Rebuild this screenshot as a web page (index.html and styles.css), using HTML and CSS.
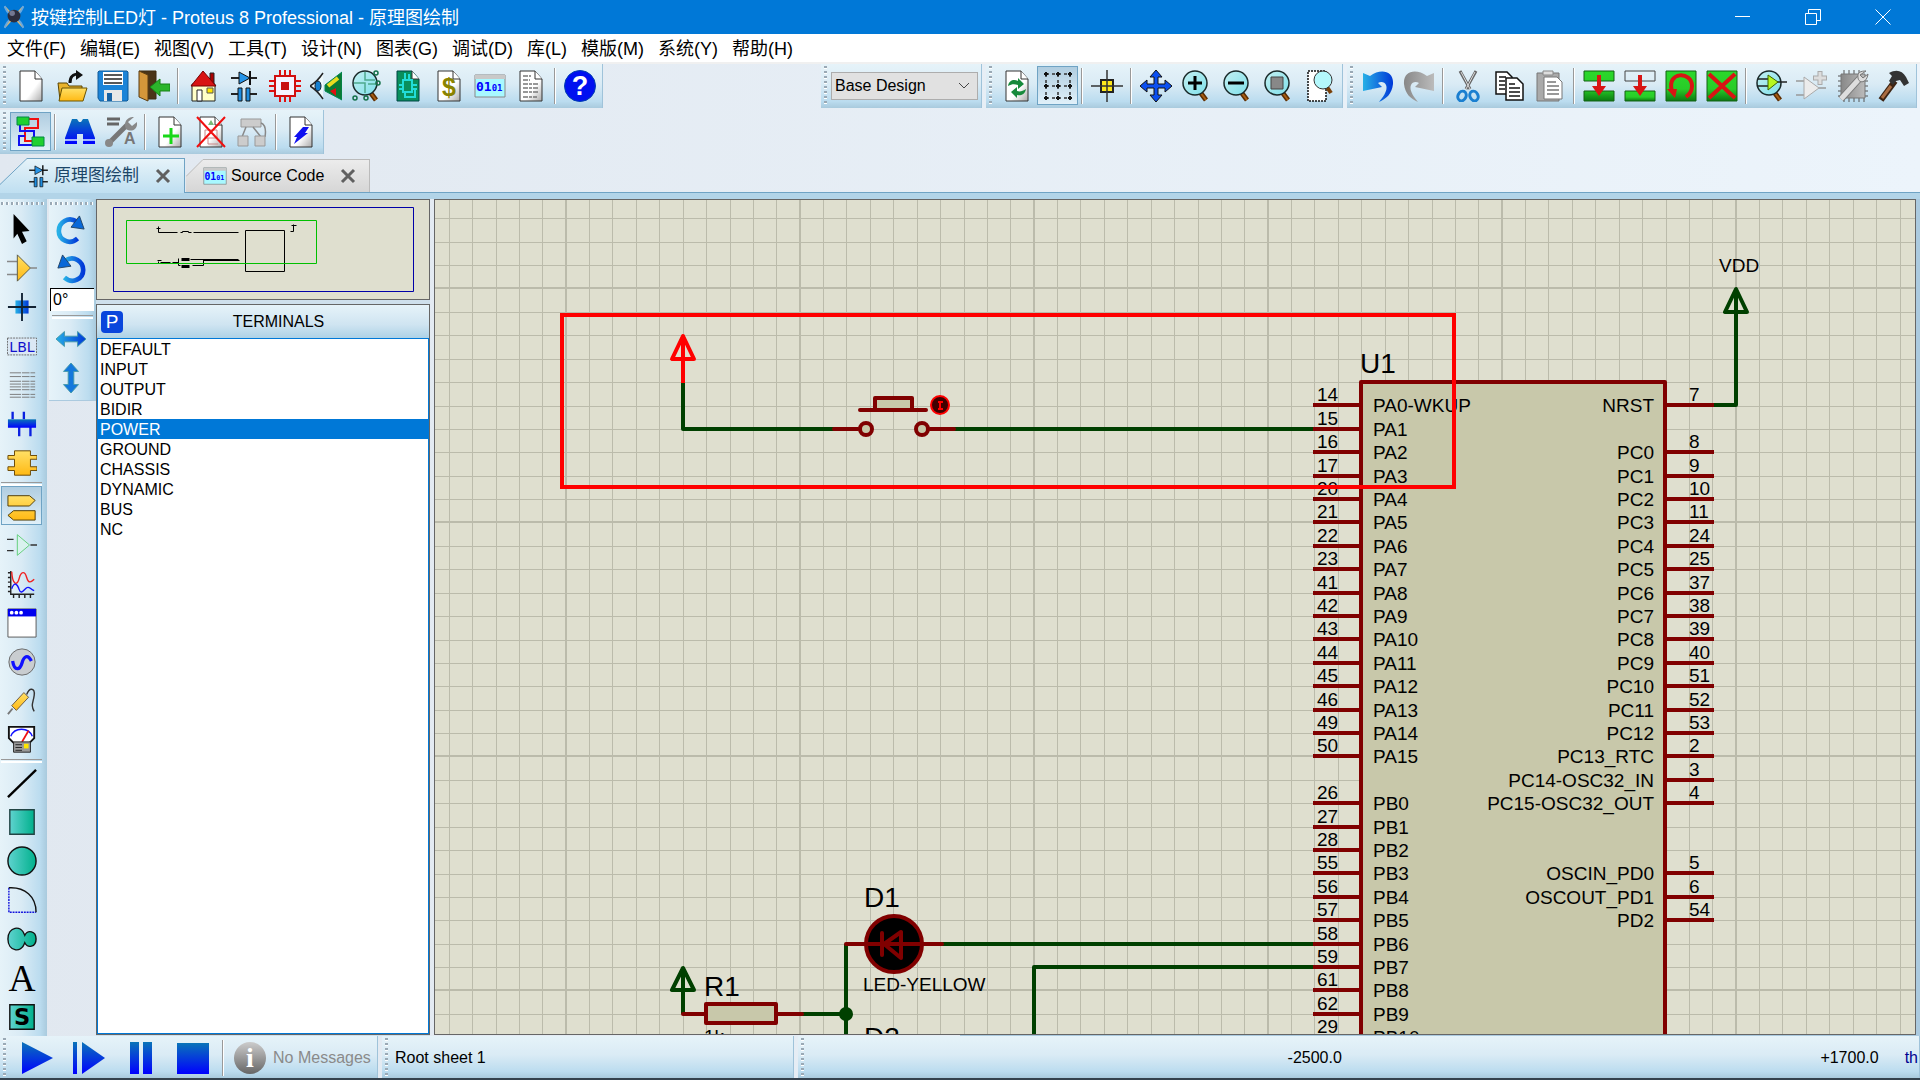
FILE: index.html
```html
<!DOCTYPE html>
<html lang="zh-CN">
<head>
<meta charset="utf-8">
<title>按键控制LED灯 - Proteus 8 Professional - 原理图绘制</title>
<link rel="stylesheet" href="styles.css">
</head>
<body>
<svg class="defs" width="0" height="0" aria-hidden="true">
  <defs>
    <linearGradient id="paper" x1="0" y1="0" x2="1" y2="1"><stop offset=".6" stop-color="#fff"/><stop offset="1" stop-color="#aaa"/></linearGradient>
    <linearGradient id="blueV" x1="0" y1="0" x2="0" y2="1"><stop offset="0" stop-color="#0a74b8"/><stop offset="1" stop-color="#00f"/></linearGradient>
    <linearGradient id="blueH" x1="0" y1="0" x2="1" y2="0"><stop offset="0" stop-color="#27b0e6"/><stop offset="1" stop-color="#0038d8"/></linearGradient>
    <linearGradient id="grayH" x1="0" y1="0" x2="1" y2="0"><stop offset="0" stop-color="#888"/><stop offset="1" stop-color="#bbb"/></linearGradient>
    <linearGradient id="gold" x1="0" y1="0" x2="0" y2="1"><stop offset="0" stop-color="#ffe066"/><stop offset="1" stop-color="#ffb914"/></linearGradient>
    <linearGradient id="teal" x1="0" y1="0" x2="1" y2="0"><stop offset="0" stop-color="#5fd3cf"/><stop offset="1" stop-color="#00b08c"/></linearGradient>
    <linearGradient id="green" x1="0" y1="0" x2="0" y2="1"><stop offset="0" stop-color="#2bd82b"/><stop offset=".6" stop-color="#28cc28"/><stop offset="1" stop-color="#0a7a12"/></linearGradient>
    <linearGradient id="lens" x1="0" y1="0" x2="1" y2="1"><stop offset="0" stop-color="#c4f0f2"/><stop offset="1" stop-color="#7fe0ea"/></linearGradient>
    <linearGradient id="steel" x1="0" y1="0" x2="0" y2="1"><stop offset="0" stop-color="#ccc"/><stop offset="1" stop-color="#666"/></linearGradient>
    <linearGradient id="tabOn" x1="0" y1="0" x2="0" y2="1"><stop offset="0" stop-color="#e6f3f9"/><stop offset="1" stop-color="#bfdff1"/></linearGradient>
    <linearGradient id="tabOff" x1="0" y1="0" x2="0" y2="1"><stop offset="0" stop-color="#ececec"/><stop offset="1" stop-color="#d6d6d6"/></linearGradient>
    <symbol id="page" viewBox="0 0 32 32"><path d="M5 1h15l7 8v22H5z" fill="url(#paper)" stroke="#333"/><path d="M20 1v8h7" fill="#fff" stroke="#333"/></symbol>
    <symbol id="schematic" viewBox="0 0 32 32"><path d="M3 8h26M3 24h9M20 24h9" stroke="#222" stroke-width="2"/><path d="M11 2v12l11-6z" fill="#2694e8" stroke="#111"/><path d="M22 1v14" stroke="#111" stroke-width="2"/><path d="M10 18h4v13h-4zM18 18h4v13h-4z" fill="#1d8ce0" stroke="#111"/></symbol>
    <symbol id="code" viewBox="0 0 32 24"><path d="M1 1h30v22H1z" fill="#a8f8ff" stroke="#888"/><path d="M1 1h30v4H1z" fill="#c9c9c9"/><text x="2" y="17" class="g-code" fill="#00f">01<tspan class="g-code-s">01</tspan></text></symbol>
    <symbol id="lensbox" viewBox="0 0 32 32"><path d="M19 22l6 8" stroke="#5c2c00" stroke-width="5"/><path d="M19 22l6 8" stroke="#a85f14" stroke-width="2"/><circle cx="14" cy="13" r="12" fill="url(#lens)" stroke="#1a2a2a" stroke-width="1.5"/></symbol>
  </defs>
</svg>

<header class="titlebar">
  <svg class="logo" viewBox="0 0 24 26"><path d="M2 2l20 22M22 2L2 24" stroke="#d8b878" stroke-width="2"/><path d="M2 1c1 5 4 8 7 10M22 1c-1 5-4 8-7 10M2 25c1-5 4-8 7-10M22 25c-1-5-4-8-7-10" fill="none" stroke="#69a7de" stroke-width="2"/><circle cx="12" cy="12" r="7" fill="#2c2d3c"/><circle cx="10" cy="9" r="3" fill="#737891"/></svg>
  <h1>按键控制LED灯 - Proteus 8 Professional - 原理图绘制</h1>
  <div class="window-buttons">
    <button aria-label="最小化"><svg viewBox="0 0 16 16"><path d="M0 7.500h15"/></svg></button>
    <button aria-label="还原"><svg viewBox="0 0 16 16"><path d="M.5 4.500h11v11H.5zM3.500 4V.5h12v11H12"/></svg></button>
    <button aria-label="关闭"><svg viewBox="0 0 16 16"><path d="M.5.5l15 15M15.500.5l-15 15"/></svg></button>
  </div>
</header>

<nav class="menubar">
  <button>文件(F)</button><button>编辑(E)</button><button>视图(V)</button><button>工具(T)</button><button>设计(N)</button><button>图表(G)</button><button>调试(D)</button><button>库(L)</button><button>模版(M)</button><button>系统(Y)</button><button>帮助(H)</button>
</nav>

<div class="toolrow">
  <div class="toolbar">
    <button class="tool" aria-label="新建"><svg><use href="#page"/></svg></button>
    <button class="tool" aria-label="打开"><svg viewBox="0 0 32 32"><path d="M2 13h9l2 3h13v14H4z" fill="#e9b32c" stroke="#5a4400"/><path d="M6 18h25l-4 13H3z" fill="url(#gold)" stroke="#6b5200"/><path d="M14 13c0-7 3-9 9-9" fill="none" stroke="#111" stroke-width="3"/><path d="M20 0l7 5-7 5z" fill="#111"/></svg></button>
    <button class="tool" aria-label="保存"><svg viewBox="0 0 32 32"><path d="M2 1h28l1 1v28l-1 1H3l-2-3V2z" fill="#1c84d8" stroke="#115a98"/><path d="M6 2h20v13H6z" fill="#fff"/><path d="M7 5h18M7 9h18M7 13h18" stroke="#222" stroke-width="1.500"/><path d="M7 20h18v11H7z" fill="#e8e8e8"/><path d="M10 23h5v8h-5z" fill="#1762a4"/></svg></button>
    <button class="tool" aria-label="关闭工程"><svg viewBox="0 0 32 32"><path d="M1 1h17v28H8" fill="#4a3418" stroke="#3d2a10"/><path d="M1 1l9 4v26l-9-4z" fill="#d4963a" stroke="#5b3d12"/><path d="M12 17l10-8v5h10v7H22v5z" fill="#2bb52b" stroke="#168016"/></svg></button>
    <span class="sep"></span>
    <button class="tool" aria-label="主页"><svg viewBox="0 0 32 32"><path d="M23 3h4v12h-4z" fill="#a00" stroke="#222"/><path d="M5 14h23v17H5z" fill="#ffffc8" stroke="#222"/><path d="M16 1l13 15H4z" fill="#d81414" stroke="#700"/><path d="M10 20h5v11h-5z" fill="#fff" stroke="#222"/><path d="M20 18h6v5h-6z" fill="#ffe600" stroke="#555"/></svg></button>
    <button class="tool" aria-label="原理图绘制"><svg><use href="#schematic"/></svg></button>
    <button class="tool" aria-label="PCB 布局"><svg viewBox="0 0 32 32"><path d="M11 0v6M16 0v6M21 0v6M11 26v6M16 26v6M21 26v6M0 11h6M0 16h6M0 21h6M26 11h6M26 16h6M26 21h6" stroke="#e01010" stroke-width="2"/><path d="M6 6h20v20H6z" fill="#f4f4ff" stroke="#d01010" stroke-width="2"/><path d="M12 12h8v8h-8z" fill="#c81010"/></svg></button>
    <button class="tool" aria-label="3D 查看器"><svg viewBox="0 0 32 32"><path d="M13 3C9 9 5 13 0 16c5 3 9 7 13 13" fill="#eef8fa" stroke="#222" stroke-width="1.500"/><ellipse cx="8" cy="16" rx="3" ry="5" fill="#147fd0" stroke="#123"/><path d="M32 2v28l-17-9v-6z" fill="#0b7a34" stroke="#085"/><path d="M18 16l10-8" stroke="#e8dc20" stroke-width="4"/><path d="M20 21l6-3v8z" fill="#e01010"/></svg></button>
    <button class="tool" aria-label="Gerber 查看器"><svg viewBox="0 0 32 32"><use href="#lensbox"/><path d="M3 13h11v10M14 2v8h10M17 14h8" fill="none" stroke="#4ea98d" stroke-width="1.500"/><g fill="none" stroke="#14714a" stroke-width="1.500"><circle cx="25" cy="3" r="2"/><circle cx="27" cy="13" r="2"/><circle cx="4" cy="28" r="2"/><circle cx="15" cy="28" r="2"/></g></svg></button>
    <button class="tool" aria-label="设计浏览器"><svg viewBox="0 0 32 32"><path d="M5 1h15l7 8v22H5z" fill="#098f5c" stroke="#044"/><path d="M20 1v8h7" fill="#fff" stroke="#333"/><path d="M11 10h9v12h-9zM7 15h4M20 15h5M7 19h4M20 19h5M13 3v7M17 4v6M13 22v5h10v-7" fill="none" stroke="#22ddd8" stroke-width="2"/></svg></button>
    <button class="tool" aria-label="物料清单"><svg viewBox="0 0 32 32"><use href="#page"/><text x="9" y="26" class="g-dollar" fill="#8a8300">$</text></svg></button>
    <button class="tool" aria-label="源代码"><svg><use href="#code"/></svg></button>
    <button class="tool" aria-label="工程备注"><svg viewBox="0 0 32 32"><use href="#page"/><path d="M8 6h8M8 10h7M8 14h15M8 18h15M8 22h15M8 27h14" stroke="#777" stroke-width="1.500" stroke-dasharray="5 1 3 1"/></svg></button>
    <span class="sep"></span>
    <button class="tool" aria-label="帮助"><svg viewBox="0 0 32 32"><circle cx="16" cy="16" r="15.500" fill="#0010f0" stroke="#0040b0"/><text x="16" y="25" text-anchor="middle" class="g-help" fill="#fff">?</text></svg></button>
  </div>
  <div class="toolbar push design">
    <label class="combo"><select aria-label="设计变体"><option>Base Design</option></select><svg viewBox="0 0 12 8"><path d="M1 1l5 5 5-5" fill="none" stroke="#444"/></svg></label>
  </div>
  <div class="toolbar">
    <button class="tool" aria-label="刷新"><svg viewBox="0 0 32 32"><use href="#page"/><path d="M7 16c1-6 6-7 10-5V8l6 6-6 5v-4c-4-1-6-1-10 1zM25 19c-1 6-6 7-9 6v3l-6-6 6-5v4c3 1 6 0 9-2z" fill="#178a3c"/></svg></button>
    <button class="tool on" aria-label="网格"><svg viewBox="0 0 32 32"><path d="M4 4h25M4 16h25M4 28h25M4 4v25M16 4v25M28 4v25" stroke="#333" stroke-width="1.500" stroke-dasharray="3 3"/><path d="M2 4h4M14 4h4M26 4h4M2 16h4M14 16h4M26 16h4M2 28h4M14 28h4M26 28h4M4 2v4M4 14v4M4 26v4M16 2v4M16 14v4M16 26v4M28 2v4M28 14v4M28 26v4" stroke="#111" stroke-width="2"/></svg></button>
    <span class="sep"></span>
    <button class="tool" aria-label="原点"><svg viewBox="0 0 32 32"><path d="M10 10h12v12H10z" fill="#ffe81c" stroke="#222" stroke-width="2"/><path d="M16 0v32M0 16h32" stroke="#333" stroke-width="1.500"/></svg></button>
    <span class="sep"></span>
    <button class="tool" aria-label="平移"><svg viewBox="0 0 32 32"><path d="M16 0l6 7h-4v7h7v-4l7 6-7 6v-4h-7v7h4l-6 7-6-7h4v-7H7v4l-7-6 7-6v4h7V7h-4z" fill="#0b4ff0" stroke="#111"/></svg></button>
    <button class="tool" aria-label="放大"><svg viewBox="0 0 32 32"><use href="#lensbox"/><path d="M14 6v14M7 13h14" stroke="#000" stroke-width="3"/></svg></button>
    <button class="tool" aria-label="缩小"><svg viewBox="0 0 32 32"><use href="#lensbox"/><path d="M6 13h16" stroke="#000" stroke-width="3"/></svg></button>
    <button class="tool" aria-label="查看全部"><svg viewBox="0 0 32 32"><use href="#lensbox"/><path d="M8 7h12v12H8z" fill="#888" stroke="#444"/></svg></button>
    <button class="tool" aria-label="查看区域"><svg viewBox="0 0 32 32"><path d="M4 1h18v30H4z" fill="#fff" stroke="#111" stroke-width="1.500" stroke-dasharray="2 1"/><path d="M23 17l4 6" stroke="#7a4008" stroke-width="4"/><circle cx="19" cy="10" r="9" fill="#b4f8fc" stroke="#333"/></svg></button>
  </div>
  <div class="toolbar">
    <button class="tool" aria-label="撤销"><svg viewBox="0 0 32 32"><path d="M1 3l7 3c11-8 24-5 23 8-1 10-7 15-14 18 5-6 9-12 7-17-1-3-5-4-8-2l4 4L1 21z" fill="url(#blueH)"/></svg></button>
    <button class="tool" aria-label="重做"><svg viewBox="0 0 32 32"><path d="M31 3l-7 3C13-2 0 1 1 14c1 10 7 15 14 18-5-6-9-12-7-17 1-3 5-4 8-2l-4 4 19 4z" fill="url(#grayH)"/></svg></button>
    <span class="sep"></span>
    <button class="tool" aria-label="剪切"><svg viewBox="0 0 32 32"><path d="M8 1l10 18M24 1L14 19" stroke="#666" stroke-width="3"/><path d="M9 2l9 17M23 2l-9 17" stroke="#ddd"/><g fill="none" stroke="#1b7fd0" stroke-width="3"><ellipse cx="10" cy="26" rx="4" ry="5" transform="rotate(25 10 26)"/><ellipse cx="22" cy="26" rx="4" ry="5" transform="rotate(-25 22 26)"/></g></svg></button>
    <button class="tool" aria-label="复制"><svg viewBox="0 0 32 32"><g fill="#fff" stroke="#111" stroke-width="1.500"><path d="M3 2h11l5 5v17H3z"/><path d="M13 8h11l6 6v16H13z"/></g><path d="M6 7h7M6 11h6M6 15h6M6 19h6M16 14h6M16 18h11M16 22h11M16 26h11" stroke="#111" stroke-width="1.500"/></svg></button>
    <button class="tool" aria-label="粘贴"><svg viewBox="0 0 32 32"><path d="M3 3h22v28H3z" fill="#aaa" stroke="#777"/><path d="M9 1h10v4H9z" fill="#ddd" stroke="#888"/><path d="M10 7h13l5 5v17H10z" fill="#fff" stroke="#777"/><path d="M13 12h9M13 16h12M13 20h12M13 24h12" stroke="#777" stroke-width="1.500"/></svg></button>
    <span class="sep"></span>
    <button class="tool" aria-label="块复制"><svg viewBox="0 0 32 32"><path d="M1 1h30v10H1zM1 21h30v10H1z" fill="url(#green)" stroke="#156015"/><path d="M14 5h4v11h5l-7 10-7-10h5z" fill="#d81414"/></svg></button>
    <button class="tool" aria-label="块移动"><svg viewBox="0 0 32 32"><path d="M1 1h30v10H1z" fill="none" stroke="#444"/><path d="M1 21h30v10H1z" fill="url(#green)" stroke="#156015"/><path d="M14 5h4v11h5l-7 10-7-10h5z" fill="#d81414"/></svg></button>
    <button class="tool" aria-label="块旋转"><svg viewBox="0 0 32 32"><path d="M1 1h30v30H1z" fill="url(#green)" stroke="#156015"/><path d="M7 21C1 1 27 1 27 16c0 5-2 8-6 11" fill="none" stroke="#d81414" stroke-width="4"/><path d="M2 19h10l-2 9z" fill="#d81414"/></svg></button>
    <button class="tool" aria-label="块删除"><svg viewBox="0 0 32 32"><path d="M1 1h30v30H1z" fill="url(#green)" stroke="#156015"/><path d="M3 4l26 24M29 4L3 28" stroke="#d81414" stroke-width="4"/></svg></button>
    <span class="sep"></span>
    <button class="tool" aria-label="选取元件"><svg viewBox="0 0 32 32"><use href="#lensbox"/><path d="M3 9h10M3 16h10M20 12h12" stroke="#222" stroke-width="1.500"/><path d="M13 5v15l10-8z" fill="#b8f820" stroke="#3a6600"/></svg></button>
    <button class="tool" aria-label="制作元件"><svg viewBox="0 0 32 32"><path d="M0 11h8M0 25h8M22 18h8" stroke="#999" stroke-width="1.500"/><path d="M8 7v22l15-11z" fill="#ececec" stroke="#aaa"/><path d="M24 1v14M17 8h14" stroke="#aaa" stroke-width="5"/><path d="M24 2v12M18 8h12" stroke="#ddd" stroke-width="3"/></svg></button>
    <button class="tool" aria-label="封装工具"><svg viewBox="0 0 32 32"><path d="M7 0v32M12 0v32M17 0v32M22 0v32M27 8v24M1 6h30M1 11h30M1 16h30M1 21h30M1 26h30" stroke="#555"/><path d="M4 4h24v24H4z" fill="url(#grayH)" stroke="#777"/><path d="M4 29l19-21" stroke="#777" stroke-width="7"/><path d="M4 29l19-21" stroke="#ddd" stroke-width="5"/><path d="M29 1c-5 0-9 1-8 7s9 5 10-4l-5 4-3-3z" fill="#ddd" stroke="#777"/></svg></button>
    <button class="tool" aria-label="分解"><svg viewBox="0 0 32 32"><path d="M3 30l14-19" stroke="#3d2413" stroke-width="6"/><path d="M4 28l9-12" stroke="#a96c42" stroke-width="3"/><path d="M11 3c7-4 13-3 17 4l3 6-5 3-4-6-4 1-3 4-4-4 3-5z" fill="#333"/></svg></button>
  </div>
</div>

<div class="toolrow second">
  <div class="toolbar">
    <button class="tool on" aria-label="自动连线"><svg viewBox="0 0 32 32"><path d="M13 3h10v9H10v13h8" fill="none" stroke="#f01010" stroke-width="2"/><path d="M5 8v7h14v6M18 29H4v-9h6" fill="none" stroke="#1010f0" stroke-width="2"/><path d="M2 1h12v8H2zM17 21h12v9H17z" fill="#20d030" stroke="#084"/></svg></button>
    <span class="sep"></span>
    <button class="tool" aria-label="查找"><svg viewBox="0 0 32 32"><path d="M8 3h5l2 3h2l2-3h5l7 19v6H19v-10h-6v10H1v-6z" fill="url(#blueV)"/><path d="M0 24h14M18 24h14" stroke="#d9ecff" stroke-width="1.500"/></svg></button>
    <button class="tool" aria-label="属性分配"><svg viewBox="0 0 32 32"><path d="M2 3h13M2 8h12" stroke="#666" stroke-width="3"/><path d="M4 27L22 9" stroke="#777" stroke-width="5"/><circle cx="4" cy="27" r="4" fill="#888"/><path d="M29 1l-6 5 4 4 5-4c1 7-5 11-11 7-3-6 1-13 8-12z" fill="#888"/><text x="19" y="28" class="g-attr" fill="#777">A</text></svg></button>
    <span class="sep"></span>
    <button class="tool" aria-label="新建图纸"><svg viewBox="0 0 32 32"><use href="#page"/><path d="M17 12v16M9 20h16" stroke="#18d818" stroke-width="3"/></svg></button>
    <button class="tool" aria-label="删除图纸"><svg viewBox="0 0 32 32"><use href="#page"/><path d="M10 14h12v8H10zM13 22v6h10" fill="none" stroke="#c88"/><path d="M13 9l3-5 3 5z" fill="#7b7"/><path d="M2 1l28 30M30 1L2 31" stroke="#f01010" stroke-width="2"/></svg></button>
    <button class="tool" aria-label="返回父图纸"><svg viewBox="0 0 32 32"><path d="M5 3h20v8H5z" fill="#ccc" stroke="#999"/><path d="M10 11L6 21M17 11l8 10M25 7c5 2 5 8 4 14" fill="none" stroke="#888" stroke-width="1.500"/><path d="M2 20h10v10H2zM19 20h10v10H19z" fill="#ccc" stroke="#999"/></svg></button>
    <span class="sep"></span>
    <button class="tool" aria-label="电气检查"><svg viewBox="0 0 32 32"><use href="#page"/><path d="M18 11h6l-4 6h3L9 28l3-7H9z" fill="#1010f0"/></svg></button>
  </div>
</div>

<div class="tabs" role="tablist">
  <div class="tab active">
    <svg class="slope" viewBox="0 0 27 35"><path d="M0 26L27 0v35H0z" fill="url(#tabOn)"/><path d="M0 26.500L27 .5" fill="none" stroke="#6fa3c4"/></svg>
    <div class="tab-body"><svg class="tab-icon"><use href="#schematic"/></svg><button role="tab" aria-selected="true">原理图绘制</button><button class="x" aria-label="关闭标签"><svg viewBox="0 0 16 16"><path d="M2 2l12 12M14 2L2 14"/></svg></button></div>
  </div>
  <div class="tab">
    <svg class="slope" viewBox="0 0 17 33"><path d="M0 17L17 0v33H0z" fill="url(#tabOff)"/><path d="M0 17.500L17 .5" fill="none" stroke="#bbb"/></svg>
    <div class="tab-body"><svg class="tab-icon"><use href="#code"/></svg><button role="tab" aria-selected="false">Source Code</button><button class="x" aria-label="关闭标签"><svg viewBox="0 0 16 16"><path d="M2 2l12 12M14 2L2 14"/></svg></button></div>
  </div>
</div>

<main class="workspace">
  <div class="palette modes">
    <button aria-label="选择"><svg viewBox="0 0 32 32"><path d="M7 0l17 18-8 1 5 10-5 3-5-11-4 5z" fill="#000"/></svg></button>
    <button aria-label="元件"><svg viewBox="0 0 32 32"><path d="M0 9h11M0 23h11M25 16h7" stroke="#888" stroke-width="1.500"/><path d="M11 2v28l14-14z" fill="url(#gold)" stroke="#554"/></svg></button>
    <button aria-label="节点"><svg viewBox="0 0 32 32"><path d="M9 9h14v14H9z" fill="url(#blueH)"/><path d="M16 1v30M1 16h30" stroke="#123" stroke-width="2"/></svg></button>
    <button aria-label="标号"><svg viewBox="0 0 32 32"><path d="M.5 7.500h31v18H.5z" fill="#dbe8f4" stroke="#666" stroke-dasharray="2 1"/><text x="16" y="22" text-anchor="middle" class="g-lbl" fill="#11c">LBL</text></svg></button>
    <button aria-label="文本脚本"><svg viewBox="0 0 32 32"><path d="M3 3h27M3 7h27M3 12h27M3 15h27M3 18h27M3 21h27M3 26h27M3 29h27" stroke="#777" stroke-dasharray="12 1 8 1"/></svg></button>
    <button aria-label="总线"><svg viewBox="0 0 32 32"><path d="M6 3v8M18 3v8M13 18v11M25 18v11" stroke="#0a20e0" stroke-width="2.500"/><path d="M1 11h30v9H1z" fill="url(#blueV)"/></svg></button>
    <button aria-label="子电路"><svg viewBox="0 0 32 32"><path d="M8 3h17v5h7v4h-7v8h7v4h-7v5H8v-5H1v-4h7v-8H1V8h7z" fill="url(#gold)" stroke="#664400"/></svg></button>
    <span class="hsep"></span>
    <button class="on" aria-label="终端"><svg viewBox="0 0 32 32"><path d="M1 5h23l6 5-6 6H1zM30 21H7l-6 5 6 5h23z" fill="url(#gold)" stroke="#4d3800"/></svg></button>
    <button aria-label="引脚"><svg viewBox="0 0 32 32"><path d="M0 10h7M0 22h7M25 16h7" stroke="#333" stroke-width="1.500"/><path d="M11 5v22l13-11z" fill="#d9f2ee" stroke="#5fce78"/></svg></button>
    <button aria-label="图表"><svg viewBox="0 0 32 32"><path d="M4 2v25h25M1 4h3M1 9h3M1 14h3M1 19h3M1 24h3M7 27v4M13 27v4M19 27v4M25 27v4" fill="none" stroke="#222" stroke-width="1.500"/><path d="M5 3c1 15 6 15 8 7s6-8 8-1 5 5 8 2" fill="none" stroke="#f02020" stroke-width="1.500"/><path d="M5 21c3-8 6-5 8 1s5 0 8-2 4 2 8 3" fill="none" stroke="#11f" stroke-width="1.500"/></svg></button>
    <button aria-label="弹出窗口"><svg viewBox="0 0 32 32"><path d="M1 1h30v30H1z" fill="#fff" stroke="#555"/><path d="M1 1h30v8H1z" fill="#00e"/><circle cx="5" cy="5" r="2" fill="#fff"/><circle cx="10" cy="5" r="2" fill="#fff"/><circle cx="15" cy="5" r="2" fill="#fff"/></svg></button>
    <button aria-label="激励源"><svg viewBox="0 0 32 32"><circle cx="16" cy="16" r="14" fill="#c9cdd0" stroke="#666"/><path d="M6 15c2 12 8 9 10 2s6-10 10-2" fill="none" stroke="#11f" stroke-width="3.500"/></svg></button>
    <button aria-label="探针"><svg viewBox="0 0 32 32"><path d="M1 30l5-6" stroke="#777" stroke-width="2"/><path d="M5 21L18 7l5 5L10 26z" fill="url(#gold)" stroke="#654"/><path d="M21 9c3-8 9-7 8 1s-4 10 0 17" fill="none" stroke="#333" stroke-width="1.500"/></svg></button>
    <button aria-label="仪表"><svg viewBox="0 0 32 32"><path d="M2 2h27v12l-5 5H7l-5-5z" fill="#fff" stroke="#111" stroke-width="2"/><path d="M4 12C8 2 23 2 27 12" fill="none" stroke="#11f" stroke-width="1.500"/><path d="M16 18L23 6" stroke="#e11" stroke-width="2"/><path d="M7 18h18v11H7z" fill="#999" stroke="#222"/><path d="M9 21h7M9 24h7M9 27h7" stroke="#222"/><path d="M18 20h5v5h-5z" fill="#ffe600"/></svg></button>
    <span class="hsep"></span>
    <button aria-label="直线"><svg viewBox="0 0 32 32"><path d="M1 31L31 2" stroke="#000" stroke-width="2.500"/></svg></button>
    <button aria-label="矩形"><svg viewBox="0 0 32 32"><path d="M3 3h26v26H3z" fill="url(#teal)" stroke="#244" stroke-width="1.500"/></svg></button>
    <button aria-label="圆形"><svg viewBox="0 0 32 32"><circle cx="16" cy="16" r="15" fill="url(#teal)" stroke="#111" stroke-width="1.500"/></svg></button>
    <button aria-label="圆弧"><svg viewBox="0 0 32 32"><path d="M2 3v26h29" fill="none" stroke="#11d" stroke-width="1.500" stroke-dasharray="2 1"/><path d="M2 3c17-1 29 9 29 26" fill="none" stroke="#111" stroke-width="1.500"/></svg></button>
    <button aria-label="路径"><svg viewBox="0 0 32 32"><path d="M19 12c3-6 12-5 12 4s-9 10-12 4C15 32 1 29 1 16S15 0 19 12z" fill="url(#teal)" stroke="#111" stroke-width="1.500"/></svg></button>
    <button aria-label="文字"><svg viewBox="0 0 32 32"><text x="16" y="30" text-anchor="middle" class="g-serif">A</text></svg></button>
    <button aria-label="符号"><svg viewBox="0 0 32 32"><path d="M3 3h26v26H3z" fill="url(#teal)" stroke="#111" stroke-width="1.500"/><text x="16" y="25" text-anchor="middle" class="g-sym">S</text></svg></button>
  </div>

  <div class="orient-col">
  <div class="palette orient">
    <button aria-label="顺时针旋转"><svg viewBox="0 0 32 32"><path d="M22 7C13 1 3 8 3 17s11 16 20 8" fill="none" stroke="url(#blueH)" stroke-width="5"/><path d="M25 1l5 14-14-2z" fill="#0868d8" stroke="#246"/></svg></button>
    <button aria-label="逆时针旋转"><svg viewBox="0 0 32 32"><path d="M10 7c9-6 19 1 19 10S18 33 9 25" fill="none" stroke="url(#blueH)" stroke-width="5"/><path d="M7 1L2 15l14-2z" fill="#0868d8" stroke="#246"/></svg></button>
    <input type="text" value="0°" aria-label="旋转角度">
    <span class="hsep"></span>
    <button aria-label="水平镜像"><svg viewBox="0 0 32 32"><path d="M0 16l9-8v5h14V8l9 8-9 8v-5H9v5z" fill="url(#blueH)" stroke="#49a"/></svg></button>
    <button aria-label="垂直镜像"><svg viewBox="0 0 32 32"><path d="M16 0l8 9h-5v14h5l-8 9-8-9h5V9H8z" fill="#1478dc" stroke="#49a"/></svg></button>
  </div>
  </div>

  <aside class="selector">
    <div class="overview">
      <svg><g fill="none" stroke="#000" transform="translate(-.5 -.5)">
        <path d="M17 8h300v84H17z" stroke="#0000a8"/>
        <path d="M62 27v6h19M84 33h2v-1h6v1h3M97 33h45M60 29h4M62 62v2M64 63h10M76 63h6M82 59v7h2M94 60h48M96 66h11v-6M107 61h36M61 61h4M197 25v7h-3M195 26h5"/>
        <path d="M85 60h8M85 67h8" stroke-width="3"/>
        <path d="M149 31h39v41h-39z"/>
        <path d="M30 21h190v43H30z" stroke="#00c000"/>
      </g></svg>
    </div>
    <section class="objects">
      <header><button class="pick">P</button><h2>TERMINALS</h2></header>
      <ul>
        <li>DEFAULT</li><li>INPUT</li><li>OUTPUT</li><li>BIDIR</li><li class="selected">POWER</li><li>GROUND</li><li>CHASSIS</li><li>DYNAMIC</li><li>BUS</li><li>NC</li>
      </ul>
    </section>
  </aside>

  <div class="editor">
    <svg class="sheet" role="img" aria-label="原理图">
      <defs>
        <pattern id="grid" width="234" height="234" patternUnits="userSpaceOnUse" x="565" y="287">
          <path d="M24.500 0v234M47.500 0v234M71.500 0v234M94.500 0v234M118.500 0v234M141.500 0v234M165.500 0v234M188.500 0v234M211.500 0v234M0 25.500h234M0 48.500h234M0 72.500h234M0 95.500h234M0 119.500h234M0 142.500h234M0 165.500h234M0 189.500h234M0 212.500h234" stroke="#bbbbab"/>
          <path d="M1 0v234M0 1h234" stroke="#bbbbab" stroke-width="2"/>
        </pattern>
      </defs>
      <g transform="translate(-435 -200)">
        <rect x="435" y="200" width="4000" height="3000" fill="url(#grid)"/>
        <g class="wire">
          <path d="M683 383v46h151M954 429h359M1714 405h22V290M942 944h371M846 944v200M1313 967h-279v200M802 1014h44M683 968v46"/>
          <path d="M1736 289l-11 23h22zM683 968l-11 22h22z"/>
        </g>
        <circle cx="846" cy="1014" r="7" fill="#004000"/>
        <g class="part">
          <path d="M834 429h24M930 429h24M860 410h66"/>
          <circle cx="866" cy="429" r="6"/><circle cx="922" cy="429" r="6"/>
          <path d="M875 410v-12h37v12z"/>
          <path d="M683 1014h22M778 1014h24M706 1004h70v19h-70z"/>
          <path d="M846 944h20M921 944h21"/>
          <circle cx="894" cy="944" r="28" class="dark"/>
          <path d="M867 944h53M882 933v22M884 944l17-12v26z" class="open"/>
        </g>
        <circle cx="940" cy="405" r="9" fill="#400000" stroke="#f00" stroke-width="2"/>
        <path d="M940 401v8M938 402h5M938 409h5" stroke="#f00" stroke-width="2"/>
        <path d="M683 383V336l-11 23h22l-11-23" fill="none" stroke="#f00" stroke-width="4" stroke-linejoin="round"/>
        <g class="part"><path d="M1361 382h304v1000h-304z"/></g>
        <g id="pins"></g>
        <g class="ref"><text x="1360" y="373">U1</text><text x="704" y="996">R1</text><text x="864" y="907">D1</text><text x="864" y="1047">D2</text></g>
        <g class="pin-text"><text x="1719" y="272">VDD</text><text x="863" y="991">LED-YELLOW</text><text x="704" y="1043">1k</text></g>
        <path d="M562 315h892v172H562z" fill="none" stroke="#f00" stroke-width="4"/>
      </g>
    </svg>
  </div>
</main>

<footer class="statusbar">
  <div class="panel sim">
    <button aria-label="运行"><svg viewBox="0 0 32 32"><path d="M1 0v32l31-16z" fill="url(#blueV)"/></svg></button>
    <button aria-label="单步"><svg viewBox="0 0 32 32"><path d="M0 0h4v32H0zM9 0v32l23-16z" fill="url(#blueV)"/></svg></button>
    <button aria-label="暂停"><svg viewBox="0 0 32 32"><path d="M5 0h9v32H5zM18 0h9v32h-9z" fill="url(#blueV)"/></svg></button>
    <button aria-label="停止"><svg viewBox="0 0 32 32"><path d="M0 1h32v31H0z" fill="url(#blueV)"/></svg></button>
    <span class="sep"></span>
    <button class="messages"><svg viewBox="0 0 32 32"><circle cx="16" cy="16" r="16" fill="url(#steel)"/><text x="16" y="25" text-anchor="middle" class="g-info" fill="#fff">i</text></svg>No Messages</button>
  </div>
  <div class="panel sheet-name">Root sheet 1</div>
  <div class="panel coords"><span class="x-pos">-2500.0</span><span>+1700.0</span><span class="unit">th</span></div>
</footer>
<div class="edge"></div>
<script src="pins.js"></script>
</body>
</html>
```
FILE: styles.css
```css
* { box-sizing: border-box; }
:root {
  --bar: linear-gradient(#e6f3f9, #daebf5 45%, #bbdcef 85%, #a9cadd);
  --bar-side: linear-gradient(90deg, #e6f3f9, #daebf5 45%, #bbdcef 85%, #a9cadd);
  --line: #6fa3c4;
}
body {
  margin: 0; height: 100vh; overflow: hidden; display: flex; flex-direction: column;
  font: 16px "Liberation Sans", "Noto Sans CJK SC", sans-serif; color: #000;
  background: linear-gradient(90deg, #e1e8f0, #ecf4fb);
}
button, input, select { font: inherit; color: inherit; border: 0; padding: 0; margin: 0; background: none; }
h1, h2, ul { margin: 0; padding: 0; font-weight: normal; }
svg { display: block; }
.defs { position: absolute; }

.titlebar { height: 34px; flex: none; display: flex; align-items: center; background: #0078d7; color: #fff; padding: 0 2px 0 3px; }
.logo { width: 22px; height: 24px; }
.titlebar h1 { font-size: 18px; line-height: 34px; margin-left: 6px; flex: 1; padding-top: 1px; }
.window-buttons { display: flex; }
.window-buttons button { width: 70px; height: 34px; display: grid; place-items: center; }
.window-buttons svg { width: 16px; height: 16px; fill: none; stroke: #fff; }

.menubar { height: 30px; flex: none; display: flex; gap: 14px; padding-left: 7px; background: #fff; border-bottom: 2px solid #f0f0f0; }
.menubar button { font-size: 18px; line-height: 28px; padding-top: 1px; }

.toolrow { flex: none; display: flex; gap: 4px; height: 46px; padding-right: 3px; }
.toolrow.second { height: 48px; }
.toolbar { position: relative; height: 44px; display: flex; align-items: center; padding: 0 3px 1px 10px; background: var(--bar); box-shadow: inset -1px 0 #9fc3da; }
.toolbar::before, .panel::before { content: ""; position: absolute; left: 3px; top: 2px; bottom: 2px; width: 3px; background: repeating-linear-gradient(#9aa9b5 0 2px, #fff 2px 3px, transparent 3px 5px); }
.push { margin-left: auto; }
.tool { width: 41px; height: 39px; display: grid; place-items: center; border: 1px solid transparent; }
.tool svg { width: 32px; height: 32px; }
.on { border: 1px solid var(--line); background: linear-gradient(#b0cde0, #e0f0f9); }
.sep { width: 8px; height: 36px; background: linear-gradient(90deg, transparent 3px, #999 3px 4px, #fff 4px 5px, transparent 5px); }
.combo { position: relative; display: block; }
.combo select { appearance: none; width: 147px; height: 28px; padding-left: 3px; border: 1px solid #adadad; background: #e1e1e1; }
.combo svg { position: absolute; right: 8px; top: 10px; width: 12px; height: 8px; }
.design { padding-right: 4px; }

.tabs { flex: none; display: flex; align-items: flex-end; height: 41px; border-bottom: 6px solid #b2d4e8; box-shadow: inset 0 -1px var(--line); }
.tab { display: flex; height: 34px; padding-bottom: 1px; margin-right: 1px; }
.tab.active { height: 35px; padding-bottom: 0; }
.tab .slope { width: 17px; height: 33px; }
.tab.active .slope { width: 27px; height: 35px; }
.tab-body { display: flex; align-items: center; border-top: 1px solid #bbb; border-right: 1px solid #bbb; background: linear-gradient(#ececec, #d6d6d6); padding-right: 13px; }
.active .tab-body { border-color: var(--line); background: linear-gradient(#e6f3f9, #bfdff1); }
.tab-icon { width: 24px; height: 24px; margin-right: 4px; }
.active .tab-icon { width: 23px; margin-right: 4px; }
.tab [role="tab"] { line-height: 20px; }
.active [role="tab"] { font-size: 17px; color: #1c4668; }
.x { margin-left: 16px; }
.x svg { width: 16px; height: 16px; stroke: #606060; stroke-width: 3; }

.workspace { flex: 1; min-height: 0; display: flex; padding-right: 4px; background: linear-gradient(90deg, transparent 50%, #abcadf 50%); }
.palette { width: 47px; display: flex; flex-direction: column; align-items: flex-start; padding: 10px 2px 0 1px; background: var(--bar-side); position: relative; }
.palette::before { content: ""; position: absolute; left: 1px; right: 1px; top: 3px; height: 3px; background: repeating-linear-gradient(90deg, #9aa9b5 0 2px, #fff 2px 3px, transparent 3px 5px); }
.palette button { flex: none; width: 41px; height: 39px; display: grid; place-items: center; }
.palette svg { width: 32px; height: 32px; }
.modes svg { width: 30px; height: 30px; }
.hsep { width: 41px; height: 4px; border-top: 1px solid #999; border-bottom: 2px solid #fff; }
.orient-col { width: 49px; padding-left: 2px; }
.orient { padding: 11px 0 3px 1px; border-bottom: 1px solid #abcadf; }
.orient .hsep { margin: 4px 0 0 2px; }
.orient svg { width: 30px; height: 30px; }
.orient input { width: 44px; height: 23px; padding-left: 2px; background: #fff; border: 1px solid #000; border-width: 1px 0 0 1px; }

.selector { width: 334px; flex: none; display: flex; flex-direction: column; gap: 4px; background: #cfe0ec; }
.overview { height: 101px; flex: none; border: 1px solid #666; background: #dfdfcf; }
.overview svg { width: 100%; height: 100%; }
.objects { flex: 1; min-height: 0; margin-bottom: 1px; display: flex; flex-direction: column; border: 1px solid #666; }
.objects header { height: 33px; flex: none; display: flex; align-items: center; padding-left: 4px; background: linear-gradient(#e6f3f9, #cfe4f1 60%, #aed2e6); }
.objects h2 { flex: 1; font-size: 16px; text-align: center; padding-left: 5px; }
.pick { width: 22px; height: 22px; border-radius: 4px; background: #0a46dc; color: #fff; font-size: 19px; line-height: 22px; }
.objects ul { flex: 1; list-style: none; background: #fff; border: 1px solid #0078d7; }
.objects li { height: 20px; line-height: 22px; padding-left: 2px; }
.selected { background: #0078d7; color: #fff; }

.editor { flex: 1; min-width: 0; margin: 0 0 1px 4px; border: 1px solid #666; background: #dfdfcf; position: relative; }
.sheet { position: absolute; inset: 0; width: 100%; height: 100%; }
.wire path { fill: none; stroke: #004000; stroke-width: 4; stroke-linejoin: round; }
.part path, .part circle { fill: #c8c8aa; stroke: #800000; stroke-width: 4; stroke-linejoin: round; stroke-linecap: round; }
.part .dark { fill: #000; }
.part .open { fill: none; }
.pin { stroke: #800000; stroke-width: 4; stroke-linecap: butt; }
.pin-text text { font-size: 19px; }
.pin-text .end { text-anchor: end; }
.ref text { font-size: 28px; }

.statusbar { height: 42px; flex: none; display: flex; gap: 4px; }
.panel { position: relative; display: flex; align-items: center; background: var(--bar); box-shadow: inset -1px 0 #9fc3da; padding: 2px 0 0 11px; }
.sim { width: 378px; }
.sim button { width: 52px; height: 36px; display: grid; place-items: center; }
.sim button svg { width: 32px; height: 32px; }
.sim .messages { width: auto; display: flex; align-items: center; gap: 7px; margin-left: 7px; color: #8a8a8a; white-space: nowrap; }
.sheet-name { width: 412px; padding-left: 13px; }
.coords { flex: 1; padding-right: 2px; }
.x-pos { flex: 1; text-align: center; }
.unit { margin-left: 26px; color: #000090; }
.edge { height: 2px; flex: none; background: #34424e; }

.g-code { font: bold 13px "DejaVu Sans Mono", monospace; }
.g-code-s { font-size: 9px; }
.g-dollar { font: bold 25px "Liberation Sans", sans-serif; }
.g-help { font: bold 27px "Liberation Sans", sans-serif; }
.g-attr { font: bold 16px "Liberation Sans", sans-serif; }
.g-lbl { font: 15px "DejaVu Sans", sans-serif; }
.g-serif { font: 40px "Liberation Serif", serif; }
.palette svg:has(.g-serif) { overflow: visible; }
.g-sym { font: bold 24px "DejaVu Sans", sans-serif; }
.g-info { font: bold 28px "Liberation Serif", serif; }
```
FILE: pins.js
```js
// Pins of U1: [slot, number, name]; slots are one grid step apart.
const STEP = 23.4;
const FIRST = 405.4;
const left = [
  ...[14, 15, 16, 17, 20, 21, 22, 23, 41, 42, 43, 44, 45, 46, 49, 50].map((n, i) => [i, n, i ? "PA" + i : "PA0-WKUP"]),
  ...[26, 27, 28, 55, 56, 57, 58, 59, 61, 62, 29].map((n, i) => [i + 17, n, "PB" + i]),
];
const right = [
  [0, 7, "NRST"],
  ...[8, 9, 10, 11, 24, 25, 37, 38, 39, 40, 51, 52, 53].map((n, i) => [i + 2, n, "PC" + i]),
  [15, 2, "PC13_RTC"], [16, 3, "PC14-OSC32_IN"], [17, 4, "PC15-OSC32_OUT"],
  [20, 5, "OSCIN_PD0"], [21, 6, "OSCOUT_PD1"], [22, 54, "PD2"],
];
function draw(list, x1, x2, numX, nameX, cls) {
  return list.map(([slot, num, name]) => {
    const y = Math.round(FIRST + STEP * slot);
    return `<line class="pin" x1="${x1}" x2="${x2}" y1="${y}" y2="${y}"/>` +
      `<text x="${numX}" y="${y - 4}">${num}</text>` +
      `<text class="${cls}" x="${nameX}" y="${y + 7}">${name}</text>`;
  }).join("");
}
const pins = document.getElementById("pins");
pins.setAttribute("class", "pin-text");
pins.innerHTML = draw(left, 1313, 1361, 1317, 1373, "start") + draw(right, 1665, 1714, 1689, 1654, "end");
```
